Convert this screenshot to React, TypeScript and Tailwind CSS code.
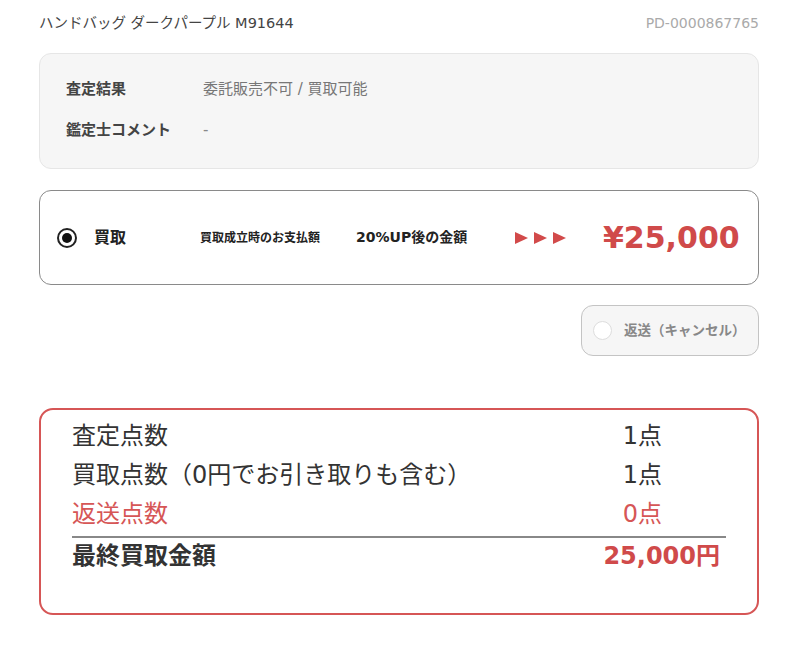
const font = { fontFamily: '"DejaVu Sans", "Noto Sans CJK JP", sans-serif' };

function Triangle() {
  return (
    <svg width="13" height="12" viewBox="0 0 13 12" className="block">
      <path d="M0 0 L13 6 L0 12 Z" fill="#d24a4a" />
    </svg>
  );
}

export default function App() {
  return (
    <div className="w-[800px] h-[650px] bg-white text-[#333]" style={font}>
      <div className="pl-[39px] pr-[41px]">
        {/* Header */}
        <div className="flex justify-between items-center h-[46px] pt-[1px]">
          <span className="text-[14.5px] text-[#444]">ハンドバッグ ダークパープル M91644</span>
          <span className="text-[14px] text-[#aaa]">PD-0000867765</span>
        </div>

        {/* Appraisal result */}
        <div className="mt-[7px] h-[116px] rounded-[12px] border border-[#e6e6e6] bg-[#f6f6f6] px-[26px] pt-[24px] flex flex-col gap-[18px]">
          <div className="flex items-center h-[23px] text-[15px]">
            <span className="w-[137px] font-bold text-[#444]">査定結果</span>
            <span className="text-[#777]">委託販売不可 / 買取可能</span>
          </div>
          <div className="flex items-center h-[23px] text-[15px]">
            <span className="w-[137px] font-bold text-[#444]">鑑定士コメント</span>
            <span className="text-[#888]">-</span>
          </div>
        </div>

        {/* Buy option */}
        <div className="mt-[21px] h-[95px] rounded-[12px] border border-[#8a8a8a] flex items-center pl-[17px]">
          <span className="w-[20px] h-[20px] rounded-full border-2 border-[#222] flex items-center justify-center">
            <span className="w-[10px] h-[10px] rounded-full bg-[#111]" />
          </span>
          <span className="ml-[17px] w-[106px] text-[16px] font-bold text-[#222]">買取</span>
          <span className="w-[156px] text-[12px] font-bold text-[#222]">買取成立時のお支払額</span>
          <span className="w-[159px] text-[14px] font-bold text-[#222]">20%UP後の金額</span>
          <span className="flex gap-[6px]">
            <Triangle />
            <Triangle />
            <Triangle />
          </span>
          <span className="ml-[37px] text-[30px] font-bold text-[#d04a4a] leading-none">¥25,000</span>
        </div>

        {/* Cancel button */}
        <div className="flex justify-end mt-[20px]">
          <div className="w-[178px] h-[51px] rounded-[12px] border border-[#c4c4c4] bg-[#f6f6f6] flex items-center pl-[11px]">
            <span className="w-[19px] h-[19px] rounded-full border border-[#ddd] bg-white" />
            <span className="ml-[12px] text-[13.5px] font-bold text-[#888]">返送（キャンセル）</span>
          </div>
        </div>

        {/* Summary */}
        <div className="mt-[52px] h-[207px] rounded-[14px] border-2 border-[#d65656] px-[31px] pt-[6px]">
          <div className="flex justify-between items-center h-[39px] text-[24px] text-[#333]">
            <span>査定点数</span>
            <span className="mr-[64px] whitespace-nowrap">1点</span>
          </div>
          <div className="flex justify-between items-center h-[39px] text-[24px] text-[#333]">
            <span>買取点数（0円でお引き取りも含む）</span>
            <span className="mr-[64px] whitespace-nowrap">1点</span>
          </div>
          <div className="flex justify-between items-center h-[39px] text-[24px] text-[#d65656]">
            <span>返送点数</span>
            <span className="mr-[64px] whitespace-nowrap">0点</span>
          </div>
          <div className="border-t-2 border-[#888] mt-[3px]" />
          <div className="flex justify-between items-center h-[36px] text-[24px] font-bold">
            <span className="text-[#333]">最終買取金額</span>
            <span className="text-[#d04a4a] mr-[6px]">25,000円</span>
          </div>
        </div>
      </div>
    </div>
  );
}
